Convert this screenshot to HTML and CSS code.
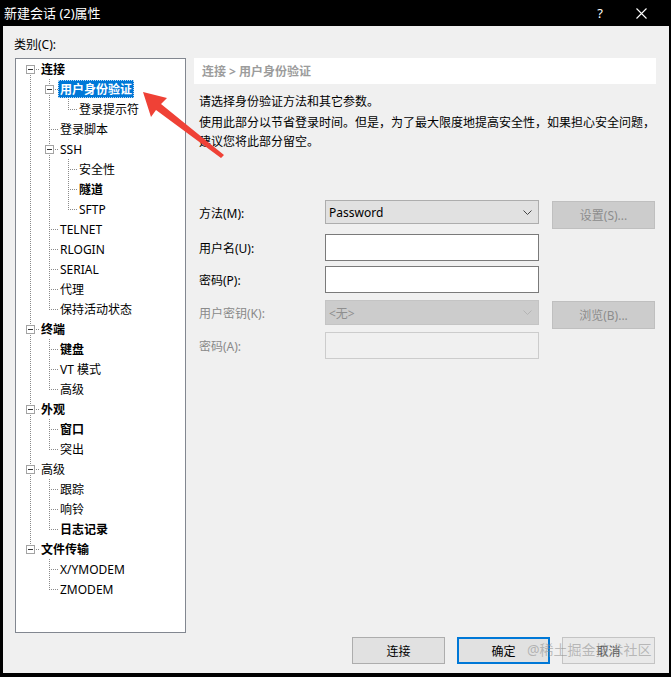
FILE: index.html
```html
<!DOCTYPE html>
<html lang="zh-CN">
<head>
<meta charset="utf-8">
<title>新建会话 (2)属性</title>
<link rel="stylesheet" href="styles.css">
</head>
<body>
<div class="win">
  <div class="titlebar">
    <span class="title">新建会话 (2)属性</span>
    <span class="help">?</span>
    <span class="close"><svg width="11" height="11" viewBox="0 0 11 11"><path d="M0.5 0.5L10.5 10.5M10.5 0.5L0.5 10.5" stroke="#fff" stroke-width="1.1"/></svg></span>
  </div>
  <div class="client">
    <div class="cat">类别(C):</div>
    <div class="main">
      <div class="tree">
        <div class="row"><span class="g f"><i class="box"></i></span><span class="lbl b">连接</span></div>
        <div class="row"><span class="g p"></span><span class="g t"><i class="box"></i></span><span class="lbl b sel">用户身份验证</span></div>
        <div class="row"><span class="g p"></span><span class="g p"></span><span class="g l"></span><span class="lbl">登录提示符</span></div>
        <div class="row"><span class="g p"></span><span class="g t"></span><span class="lbl">登录脚本</span></div>
        <div class="row"><span class="g p"></span><span class="g t"><i class="box"></i></span><span class="lbl">SSH</span></div>
        <div class="row"><span class="g p"></span><span class="g p"></span><span class="g t"></span><span class="lbl">安全性</span></div>
        <div class="row"><span class="g p"></span><span class="g p"></span><span class="g t"></span><span class="lbl b">隧道</span></div>
        <div class="row"><span class="g p"></span><span class="g p"></span><span class="g l"></span><span class="lbl">SFTP</span></div>
        <div class="row"><span class="g p"></span><span class="g t"></span><span class="lbl">TELNET</span></div>
        <div class="row"><span class="g p"></span><span class="g t"></span><span class="lbl">RLOGIN</span></div>
        <div class="row"><span class="g p"></span><span class="g t"></span><span class="lbl">SERIAL</span></div>
        <div class="row"><span class="g p"></span><span class="g t"></span><span class="lbl">代理</span></div>
        <div class="row"><span class="g p"></span><span class="g l"></span><span class="lbl">保持活动状态</span></div>
        <div class="row"><span class="g t"><i class="box"></i></span><span class="lbl b">终端</span></div>
        <div class="row"><span class="g p"></span><span class="g t"></span><span class="lbl b">键盘</span></div>
        <div class="row"><span class="g p"></span><span class="g t"></span><span class="lbl">VT 模式</span></div>
        <div class="row"><span class="g p"></span><span class="g l"></span><span class="lbl">高级</span></div>
        <div class="row"><span class="g t"><i class="box"></i></span><span class="lbl b">外观</span></div>
        <div class="row"><span class="g p"></span><span class="g t"></span><span class="lbl b">窗口</span></div>
        <div class="row"><span class="g p"></span><span class="g l"></span><span class="lbl">突出</span></div>
        <div class="row"><span class="g t"><i class="box"></i></span><span class="lbl">高级</span></div>
        <div class="row"><span class="g p"></span><span class="g t"></span><span class="lbl">跟踪</span></div>
        <div class="row"><span class="g p"></span><span class="g t"></span><span class="lbl">响铃</span></div>
        <div class="row"><span class="g p"></span><span class="g l"></span><span class="lbl b">日志记录</span></div>
        <div class="row"><span class="g l"><i class="box"></i></span><span class="lbl b">文件传输</span></div>
        <div class="row"><span class="g"></span><span class="g t"></span><span class="lbl">X/YMODEM</span></div>
        <div class="row"><span class="g"></span><span class="g l"></span><span class="lbl">ZMODEM</span></div>
      </div>
      <div class="panel">
        <div class="head">连接 &gt; 用户身份验证</div>
        <p class="desc1">请选择身份验证方法和其它参数。</p>
        <p class="desc2">使用此部分以节省登录时间。但是，为了最大限度地提高安全性，如果担心安全问题，<br>建议您将此部分留空。</p>
        <div class="form">
          <div class="lab h24">方法(M):</div>
          <div class="select h24"><span>Password</span><svg class="chev" width="9" height="5" viewBox="0 0 9 5"><path d="M0.5 0.5L4.5 4.5L8.5 0.5" fill="none" stroke="#444" stroke-width="1"/></svg></div>
          <div class="btn dis mt1">设置(S)...</div>

          <div class="lab h27">用户名(U):</div>
          <div class="input h27"></div>
          <div></div>

          <div class="lab h27">密码(P):</div>
          <div class="input h27"></div>
          <div></div>

          <div class="lab h25 gray">用户密钥(K):</div>
          <div class="select h25 dsel"><span>&lt;无&gt;</span><svg class="chev" width="9" height="5" viewBox="0 0 9 5"><path d="M0.5 0.5L4.5 4.5L8.5 0.5" fill="none" stroke="#b4b4b4" stroke-width="1"/></svg></div>
          <div class="btn dis mt1">浏览(B)...</div>

          <div class="lab h27 gray">密码(A):</div>
          <div class="input h27 dinput"></div>
          <div></div>
        </div>
      </div>
    </div>
    <div class="actions">
      <div class="btn act">连接</div>
      <div class="btn act focus">确定</div>
      <div class="btn act light">取消</div>
    </div>
    <div class="watermark">@稀土掘金技术社区</div>
  </div>
  <svg class="arrow" width="671" height="677" viewBox="0 0 671 677">
    <path d="M221 158 L224 155 L161 104 L167 98 L143 92 L151 117 L156 110 Z" fill="#ef4136"/>
  </svg>
</div>
</body>
</html>
```
FILE: styles.css
```css
* { box-sizing: border-box; }
html, body { margin: 0; padding: 0; background: #000; }
body {
  font-family: "Noto Sans", "Noto Sans CJK SC", sans-serif;
  font-size: 12px;
  color: #000;
}
.win {
  position: relative;
  width: 671px;
  height: 677px;
  background: #000;
  overflow: hidden;
}
.titlebar {
  height: 26px;
  display: flex;
  align-items: center;
  color: #fff;
  font-size: 13px;
  padding-left: 4px;
}
.title { flex: 1; line-height: 26px; }
.help { width: 12px; text-align: center; margin-right: 30px; font-size: 13px; }
.close { width: 11px; height: 11px; margin-right: 24px; display: flex; }

.client {
  position: relative;
  width: 666px;
  height: 647px;
  margin-left: 3px;
  background: #f0f0f0;
  display: flex;
  flex-direction: column;
}
.cat {
  margin: 9px 0 0 11px;
  height: 20px;
  line-height: 20px;
}
.main {
  display: flex;
  gap: 8px;
  margin-top: 3px;
  padding-left: 12px;
}
.tree {
  width: 171px;
  height: 575px;
  border: 1px solid #828790;
  background: #fff;
  padding-left: 5px;
}
.row {
  display: flex;
  height: 20px;
  align-items: flex-start;
}
.g {
  flex: none;
  width: 19px;
  height: 20px;
  display: flex;
  align-items: flex-start;
  padding-left: 5px;
  background-repeat: no-repeat;
}
.p {
  background-image: repeating-linear-gradient(to bottom, #8a8a8a 0 1px, transparent 1px 2px);
  background-size: 1px 20px;
  background-position: 9px 0;
}
.t {
  background-image:
    repeating-linear-gradient(to bottom, #8a8a8a 0 1px, transparent 1px 2px),
    repeating-linear-gradient(to right, #8a8a8a 0 1px, transparent 1px 2px);
  background-size: 1px 20px, 10px 1px;
  background-position: 9px 0, 9px 10px;
}
.l {
  background-image:
    repeating-linear-gradient(to bottom, #8a8a8a 0 1px, transparent 1px 2px),
    repeating-linear-gradient(to right, #8a8a8a 0 1px, transparent 1px 2px);
  background-size: 1px 10px, 10px 1px;
  background-position: 9px 0, 9px 10px;
}
.f {
  background-image:
    repeating-linear-gradient(to bottom, #8a8a8a 0 1px, transparent 1px 2px),
    repeating-linear-gradient(to right, #8a8a8a 0 1px, transparent 1px 2px);
  background-size: 1px 10px, 10px 1px;
  background-position: 9px 10px, 9px 10px;
}
.box {
  display: block;
  width: 9px;
  height: 9px;
  margin-top: 6px;
  border: 1px solid #a3a3a3;
  background: #fff linear-gradient(#333, #333) no-repeat center / 5px 1px;
}
.lbl {
  height: 18px;
  line-height: 20px;
  margin-top: 1px;
  margin-left: -1px;
  padding: 0 2px;
  white-space: nowrap;
}
.b { font-weight: bold; }
.sel {
  background: #0078d7;
  color: #fff;
  outline: 1px dotted #b9d9f3;
  outline-offset: -1px;
}

.panel { width: 462px; }
.head {
  height: 26px;
  line-height: 27px;
  background: #fff;
  padding-left: 8px;
  color: #9c9c9c;
  font-weight: bold;
}
.desc1 {
  margin: 8px 0 0 5px;
  line-height: 20px;
}
.desc2 {
  margin: 1px 0 0 5px;
  line-height: 19px;
  white-space: nowrap;
}
.form {
  margin: 49px 0 0 5px;
  display: grid;
  grid-template-columns: 113px 214px 103px;
  grid-template-rows: 34px 32px 34px 32px 27px;
  column-gap: 13px;
  align-items: start;
}
.lab { display: flex; align-items: center; padding-top: 1px; }
.gray { color: #8a8a8a; }
.h24 { height: 24px; }
.h25 { height: 25px; }
.h27 { height: 27px; }
.mt1 { margin-top: 1px; }
.select {
  display: flex;
  align-items: center;
  justify-content: space-between;
  padding: 0 6px 0 3px;
  background: #e1e1e1;
  border: 1px solid #adadad;
}
.dsel {
  background: #cccccc;
  border-color: #c4c4c4;
  color: #8f8f8f;
}
.chev { display: block; }
.input {
  background: #fff;
  border: 1px solid #7a7a7a;
}
.dinput {
  background: #f0f0f0;
  border-color: #cccccc;
}
.btn {
  height: 28px;
  display: flex;
  align-items: center;
  justify-content: center;
}
.dis {
  background: #cccccc;
  border: 1px solid #bfbfbf;
  color: #8d8d8d;
}
.actions {
  display: flex;
  justify-content: flex-end;
  gap: 12px;
  margin-top: 4px;
  padding-right: 14px;
}
.act {
  width: 93px;
  height: 27px;
  background: #e1e1e1;
  border: 1px solid #adadad;
}
.focus {
  border: 2px solid #0078d7;
}
.light {
  background: #e9e9e9;
  border-color: #c4c4c4;
  color: #555;
}
.watermark {
  position: absolute;
  left: 524px;
  top: 613px;
  font-size: 14px;
  line-height: 22px;
  color: rgba(140, 140, 140, 0.55);
  white-space: nowrap;
}
.arrow {
  position: absolute;
  left: 0;
  top: 0;
  pointer-events: none;
}
```
